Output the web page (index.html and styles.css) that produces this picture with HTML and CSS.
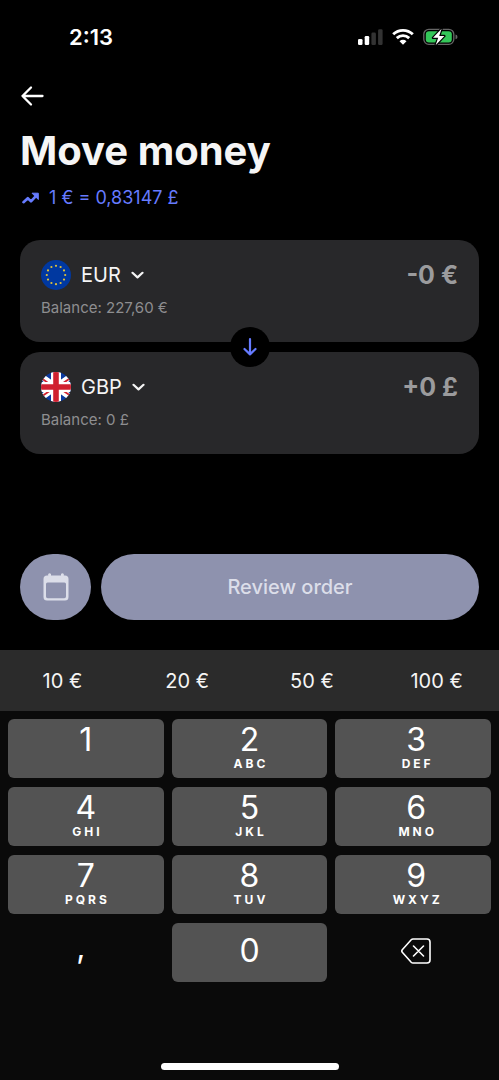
FILE: index.html
```html
<!DOCTYPE html>
<html lang="en">
<head>
<meta charset="utf-8">
<meta name="viewport" content="width=device-width, initial-scale=1">
<title>Move money</title>
<link rel="stylesheet" href="styles.css">
</head>
<body>
<div class="screen">
  <header class="status">
    <time class="clock">2:13</time>
    <div class="status-icons">
      <svg width="26" height="18" viewBox="0 0 26 18" aria-hidden="true">
        <rect x="1" y="11" width="4.5" height="6" rx="1.3" fill="#fff"/>
        <rect x="7.7" y="8" width="4.5" height="9" rx="1.3" fill="#fff"/>
        <rect x="14.4" y="4.6" width="4.5" height="12.4" rx="1.3" fill="#333"/>
        <rect x="21.1" y="1.2" width="4.5" height="15.8" rx="1.3" fill="#333"/>
      </svg>
      <svg width="22" height="18" viewBox="0 0 22 18" aria-hidden="true">
        <g fill="none" stroke="#fff" stroke-width="2.9">
          <path d="M1.2 6.3a14.2 14.2 0 0 1 19.6 0"/>
          <path d="M4.8 10.1a9 9 0 0 1 12.4 0"/>
        </g>
        <path d="M11 16.8L7.5 13.3a5 5 0 0 1 7 0z" fill="#fff"/>
      </svg>
      <svg width="35" height="18" viewBox="0 0 35 18" aria-hidden="true">
        <rect x=".8" y="1.3" width="30" height="15" rx="5" fill="none" stroke="#666" stroke-width="1.3"/>
        <rect x="2.8" y="3.2" width="26" height="11.2" rx="3.2" fill="#34c759"/>
        <path d="M32.5 6.5q2 .5 2 2.4t-2 2.4z" fill="#666"/>
        <path d="M18.6.8L10 9.8h5.2l-2.6 7.4 8.8-9.2h-5.2z" fill="#fff" stroke="#000" stroke-width="2.4" stroke-linejoin="round" paint-order="stroke"/>
      </svg>
    </div>
  </header>

  <main class="content">
    <button class="back" type="button" aria-label="Back">
      <svg width="24" height="22" viewBox="0 0 24 22" aria-hidden="true"><path d="M22.5 11H2.5M11 2.5L2.5 11l8.5 8.5" fill="none" stroke="#fff" stroke-width="2.3" stroke-linecap="round" stroke-linejoin="round"/></svg>
    </button>
    <h1 class="title">Move money</h1>
    <a class="rate" href="#rate">
      <svg width="18" height="14" viewBox="0 0 18 14" aria-hidden="true"><path d="M1.5 11.2l4.300-4 3.200 3.200 4.200-4.600" fill="none" stroke="#667bff" stroke-width="2.6" stroke-linecap="round" stroke-linejoin="round"/><path d="M10 2.2h6.3v6.3z" fill="#667bff" stroke="#667bff" stroke-linejoin="round"/></svg>
      <span>1 € = 0,83147 £</span>
    </a>

    <div class="cards">
      <section class="card">
        <div class="row">
          <button class="currency" type="button">
            <svg width="30" height="30" viewBox="0 0 30 30" aria-hidden="true">
              <circle cx="15" cy="15" r="15" fill="#0038a0"/>
              <g fill="#dfc13b">
                <circle cx="15" cy="5.8" r="1.1"/><circle cx="19.6" cy="7" r="1.1"/><circle cx="23" cy="10.4" r="1.1"/>
                <circle cx="24.2" cy="15" r="1.1"/><circle cx="23" cy="19.6" r="1.1"/><circle cx="19.6" cy="23" r="1.1"/>
                <circle cx="15" cy="24.2" r="1.1"/><circle cx="10.4" cy="23" r="1.1"/><circle cx="7" cy="19.6" r="1.1"/>
                <circle cx="5.8" cy="15" r="1.1"/><circle cx="7" cy="10.4" r="1.1"/><circle cx="10.4" cy="7" r="1.1"/>
              </g>
            </svg>
            <span>EUR</span>
            <svg class="chevron" width="13" height="8" viewBox="0 0 13 8" aria-hidden="true"><path d="M1.5 1.8l5 4.6 5-4.6"/></svg>
          </button>
          <output class="amount">-0 €</output>
        </div>
        <p class="balance">Balance: 227,60 €</p>
      </section>
      <button class="swap" type="button" aria-label="Swap currencies">
        <svg width="14" height="18" viewBox="0 0 14 18" aria-hidden="true"><path d="M7 1.2v15.2M1.5 11l5.5 5.4 5.5-5.4" fill="none" stroke="#667bff" stroke-width="2.2" stroke-linecap="round" stroke-linejoin="round"/></svg>
      </button>
      <section class="card">
        <div class="row">
          <button class="currency" type="button">
            <svg width="30" height="30" viewBox="0 0 30 30" aria-hidden="true">
              <clipPath id="disc"><circle cx="15" cy="15" r="15"/></clipPath>
              <g clip-path="url(#disc)">
                <path d="M0 0h30v30H0z" fill="#0a39a0"/>
                <path d="M-1 3.5l32 23M31 3.5l-32 23" stroke="#fff" stroke-width="6"/>
                <path d="M0 6l10 7M31 5L20 12.5M-1 25.5L10 18M30 24l-9-6" stroke="#d0202f" stroke-width="1.8"/>
                <path d="M15 0v30M0 15h30" stroke="#fff" stroke-width="10"/>
                <path d="M15 0v30M0 15h30" stroke="#d0202f" stroke-width="5.6"/>
              </g>
            </svg>
            <span>GBP</span>
            <svg class="chevron" width="13" height="8" viewBox="0 0 13 8" aria-hidden="true"><path d="M1.5 1.8l5 4.6 5-4.6"/></svg>
          </button>
          <output class="amount">+0 £</output>
        </div>
        <p class="balance">Balance: 0 £</p>
      </section>
    </div>

    <div class="actions">
      <button class="pill schedule" type="button" aria-label="Schedule">
        <svg width="26" height="28" viewBox="0 0 26 28" aria-hidden="true">
          <path d="M4 2.6h1.2V.9q1.4-1.3 2.8 0v1.7h10V.9q1.4-1.3 2.8 0v1.7H22q3.5 0 3.5 3.5v18q0 3.500-3.500 3.500H4q-3.500 0-3.500-3.500v-18q0-3.500 3.500-3.500zM4.500 9.500q-1.500 0-1.500 1.500v12.500q0 1.700 1.700 1.700h16.600q1.700 0 1.700-1.700V11q0-1.500-1.500-1.500z" fill="#dcdee9" fill-rule="evenodd"/>
        </svg>
      </button>
      <button class="pill review" type="button">Review order</button>
    </div>
  </main>

  <footer class="keyboard">
    <div class="presets">
      <button type="button">10 €</button>
      <button type="button">20 €</button>
      <button type="button">50 €</button>
      <button type="button">100 €</button>
    </div>
    <div class="keys">
      <button class="key" type="button"><span>1</span></button>
      <button class="key" type="button"><span>2</span><small>ABC</small></button>
      <button class="key" type="button"><span>3</span><small>DEF</small></button>
      <button class="key" type="button"><span>4</span><small>GHI</small></button>
      <button class="key" type="button"><span>5</span><small>JKL</small></button>
      <button class="key" type="button"><span>6</span><small>MNO</small></button>
      <button class="key" type="button"><span>7</span><small>PQRS</small></button>
      <button class="key" type="button"><span>8</span><small>TUV</small></button>
      <button class="key" type="button"><span>9</span><small>WXYZ</small></button>
      <button class="key plain comma" type="button"><span>,</span></button>
      <button class="key single" type="button"><span>0</span></button>
      <button class="key plain" type="button" aria-label="Delete">
        <svg width="30" height="26" viewBox="0 0 30 26" aria-hidden="true"><path d="M12 1h14q3 0 3 3v18q0 3-3 3H12q-1 0-1.8-.8L1.5 14.5q-1.4-1.5 0-3l8.7-9.7Q11 1 12 1zM12.5 8l10 10M22.5 8l-10 10" fill="none" stroke="#fff" stroke-width="1.6" stroke-linecap="round"/></svg>
      </button>
    </div>
    <div class="home"></div>
  </footer>
</div>
</body>
</html>
```

FILE: styles.css
```css
* { box-sizing: border-box; }

body {
  margin: 0;
  background: #000;
  color: #f5f5f5;
  font-family: Inter, "Liberation Sans", sans-serif;
}

button {
  margin: 0;
  padding: 0;
  border: 0;
  background: none;
  color: inherit;
  font: inherit;
  cursor: pointer;
}

svg { display: block; flex: none; }

.screen {
  min-height: 100vh;
  display: flex;
  flex-direction: column;
}

.status {
  display: flex;
  justify-content: space-between;
  align-items: center;
  height: 74px;
  padding: 0 41px 0 69px;
}

.clock {
  font-size: 22px;
  font-weight: 600;
  color: #fff;
}

.status-icons {
  display: flex;
  align-items: center;
  gap: 9px;
}

.content { padding: 0 20px; }

.back {
  display: flex;
  align-items: center;
  width: 44px;
  height: 44px;
}

.title {
  margin: 8px 0 0;
  font-size: 40px;
  line-height: 50px;
  font-weight: 700;
}

.rate {
  display: flex;
  align-items: center;
  gap: 9px;
  width: max-content;
  margin-top: 10px;
  padding-left: 2px;
  color: #667bff;
  font-size: 18px;
  line-height: 24px;
  text-decoration: none;
}

.cards {
  position: relative;
  display: grid;
  gap: 10px;
  margin-top: 30px;
}

.card {
  padding: 20px 21px 22px;
  border-radius: 20px;
  background: #28282a;
}

.row {
  display: flex;
  justify-content: space-between;
  align-items: center;
}

.currency {
  display: flex;
  align-items: center;
  gap: 10px;
  height: 30px;
  font-size: 20px;
  font-weight: 400;
}

.chevron {
  fill: none;
  stroke: #f5f5f5;
  stroke-width: 2.2px;
  stroke-linecap: round;
  stroke-linejoin: round;
}

.amount {
  color: #9b9b9d;
  font-size: 25px;
  line-height: 30px;
  font-weight: 700;
}

.balance {
  margin: 8px 0 0;
  color: #8e8e90;
  font-size: 15px;
  line-height: 20px;
  padding-bottom: 2px;
}

.swap {
  position: absolute;
  top: 50%;
  left: 50%;
  display: grid;
  place-items: center;
  width: 40px;
  height: 40px;
  border-radius: 50%;
  background: #000;
  transform: translate(-50%, -50%);
}

.actions {
  display: flex;
  gap: 10px;
  margin: 100px 0 30px;
}

.pill {
  display: grid;
  place-items: center;
  height: 66px;
  border-radius: 36px;
  background: #8e92ae;
  color: #dcdee9;
  font-size: 20px;
  font-weight: 500;
}

.schedule { width: 71px; }

.review { flex: 1; }

.keyboard {
  margin-top: auto;
  background: #0a0a0a;
}

.presets {
  display: grid;
  grid-template-columns: repeat(4, 1fr);
  height: 61px;
  background: #2b2b2b;
  font-size: 20px;
}

.keys {
  display: grid;
  grid-template-columns: repeat(3, 1fr);
  grid-auto-rows: 59px;
  gap: 9px 8px;
  padding: 8px;
}

.key {
  display: flex;
  flex-direction: column;
  align-items: center;
  padding-top: 4px;
  border-radius: 6px;
  background: #535353;
  color: #fff;
  font-size: 32px;
  line-height: 34px;
  font-weight: 400;
}

.key:nth-child(3n) { padding-left: 6px; }

.key small {
  padding-left: 3px;
  font-size: 12px;
  line-height: 14px;
  font-weight: 700;
  letter-spacing: 3px;
}

.single,
.plain {
  justify-content: center;
  padding-top: 0;
  padding-bottom: 3px;
}

.plain { background: none; }

.comma {
  padding-right: 10px;
  padding-bottom: 12px;
}

.home {
  width: 178px;
  height: 7px;
  margin: 73px auto 0;
  border-radius: 4px;
  background: #fff;
}

.keyboard::after {
  content: "";
  display: block;
  height: 10px;
}
```
